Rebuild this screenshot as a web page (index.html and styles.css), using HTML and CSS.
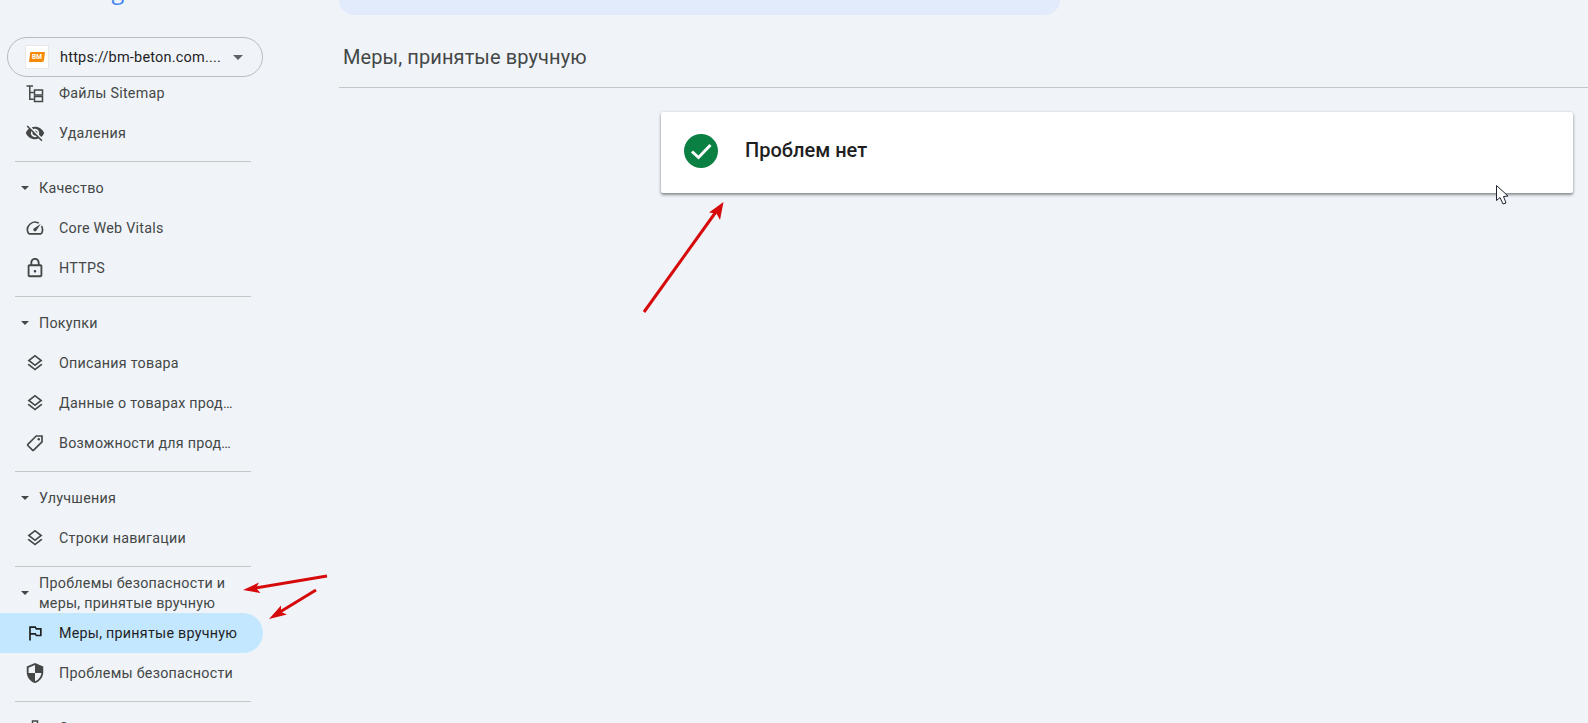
FILE: index.html
```html
<!DOCTYPE html>
<html lang="ru">
<head>
<meta charset="utf-8">
<title>Меры, принятые вручную</title>
<link rel="stylesheet" href="styles.css">
</head>
<body>
<svg class="defs" width="0" height="0" aria-hidden="true">
  <symbol id="i-layers" viewBox="0 0 24 24"><path d="M11.99 18.54l-7.37-5.73L3 14.07l9 7 9-7-1.63-1.27-7.38 5.74zM12 16l7.36-5.73L21 9l-9-7-9 7 1.63 1.27L12 16zm0-11.47L17.74 9 12 13.47 6.26 9 12 4.53z"/></symbol>
</svg>
<header class="topbar">
  <div class="logo"><span class="g-blue">G</span><span class="g-red">o</span><span class="g-yellow">o</span><span class="g-blue">g</span><span class="g-green">l</span><span class="g-red">e</span> <span class="g-grey">Search Console</span></div>
  <div class="search"></div>
</header>
<div class="layout">
  <aside class="sidebar">
    <div class="property">
      <span class="favicon"><svg width="16" height="10" viewBox="0 0 16 10"><path class="fav-shape" d="M2 0h14l-1 8a2 2 0 0 1-2 2H0l1-8a1.5 1.5 0 0 1 1-2z"/><text x="8" y="7.4" class="fav-text">BM</text></svg></span>
      <span class="property-url">https://bm-beton.com....</span>
      <span class="caret caret-prop"></span>
    </div>
    <nav class="nav">
      <div class="nav-inner">
        <a class="item"><svg class="ico" viewBox="0 0 20 20"><path class="line" d="M1.5 3h6.5M4.8 3v13.2h4M4.8 9.5h4"/><rect class="line" x="9.5" y="7" width="8" height="5"/><rect class="line" x="9.5" y="13.5" width="8" height="5"/></svg><span class="label">Файлы Sitemap</span></a>
        <a class="item"><svg class="ico" viewBox="0 0 24 24"><path d="M12 7c2.76 0 5 2.24 5 5 0 .65-.13 1.26-.36 1.83l2.92 2.92c1.51-1.26 2.7-2.89 3.43-4.75-1.73-4.39-6-7.5-11-7.5-1.4 0-2.74.25-3.98.7l2.16 2.16C10.74 7.13 11.35 7 12 7zM2 4.27l2.28 2.28.46.46C3.08 8.3 1.78 10.02 1 12c1.73 4.39 6 7.5 11 7.5 1.55 0 3.03-.3 4.38-.84l.42.42L19.73 22 21 20.73 3.27 3 2 4.27zM7.53 9.8l1.55 1.55c-.05.21-.08.43-.08.65 0 1.66 1.34 3 3 3 .22 0 .44-.03.65-.08l1.55 1.55c-.67.33-1.41.53-2.2.53-2.76 0-5-2.24-5-5 0-.79.2-1.53.53-2.2zm4.31-.78l3.15 3.15.02-.16c0-1.66-1.34-3-3-3l-.17.01z"/></svg><span class="label">Удаления</span></a>
        <hr class="divider">
        <div class="heading"><span class="caret"></span><span>Качество</span></div>
        <a class="item"><svg class="ico" viewBox="0 0 24 24"><path d="M20.38 8.57l-1.23 1.85a8 8 0 0 1-.22 7.58H5.07A8 8 0 0 1 15.58 6.85l1.85-1.23A10 10 0 0 0 3.35 19a2 2 0 0 0 1.72 1h13.85a2 2 0 0 0 1.74-1 10 10 0 0 0-.27-10.44zm-9.79 6.84a2 2 0 0 0 2.83 0l5.66-8.49-8.49 5.66a2 2 0 0 0 0 2.83z"/></svg><span class="label">Core Web Vitals</span></a>
        <a class="item"><svg class="ico ico-lg" viewBox="0 0 24 24"><path d="M18 8h-1V6c0-2.76-2.24-5-5-5S7 3.24 7 6v2H6c-1.1 0-2 .9-2 2v10c0 1.1.9 2 2 2h12c1.1 0 2-.9 2-2V10c0-1.1-.9-2-2-2zM9 6c0-1.66 1.34-3 3-3s3 1.34 3 3v2H9V6zm9 14H6V10h12v10zm-6-3c.8 0 1.4-.6 1.4-1.4s-.6-1.4-1.4-1.4-1.4.6-1.4 1.4.6 1.4 1.4 1.4z"/></svg><span class="label">HTTPS</span></a>
        <hr class="divider">
        <div class="heading"><span class="caret"></span><span>Покупки</span></div>
        <a class="item"><svg class="ico"><use href="#i-layers"/></svg><span class="label">Описания товара</span></a>
        <a class="item"><svg class="ico"><use href="#i-layers"/></svg><span class="label">Данные о товарах продавца</span></a>
        <a class="item"><svg class="ico" viewBox="0 0 24 24"><path d="M21.4 2.6H13L2.7 12.9a2 2 0 0 0 0 2.8l5.6 5.6a2 2 0 0 0 2.8 0L21.4 11V2.6zM19.4 10.2l-9.7 9.7-5.6-5.6 9.7-9.7h5.6v5.6z"/><circle cx="16.5" cy="7.5" r="1.5"/></svg><span class="label">Возможности для продавцов</span></a>
        <hr class="divider">
        <div class="heading"><span class="caret"></span><span>Улучшения</span></div>
        <a class="item"><svg class="ico"><use href="#i-layers"/></svg><span class="label">Строки навигации</span></a>
        <hr class="divider">
        <div class="heading heading-two"><span class="caret"></span><span>Проблемы безопасности и меры, принятые вручную</span></div>
        <a class="item item-active"><svg class="ico" viewBox="0 0 24 24"><path d="M14 6l-1-2H5v17h2v-7h5l1 2h7V6h-6zm4 8h-4l-1-2H7V6h5l1 2h5v6z"/></svg><span class="label">Меры, принятые вручную</span></a>
        <a class="item"><svg class="ico ico-lg" viewBox="0 0 24 24"><path d="M12 1L3 5v6c0 5.55 3.84 10.74 9 12 5.16-1.26 9-6.45 9-12V5l-9-4zm0 10.99h7c-.53 4.12-3.28 7.79-7 8.94V12H5V6.3l7-3.11v8.8z"/></svg><span class="label">Проблемы безопасности</span></a>
        <hr class="divider">
        <a class="item"><svg class="ico" viewBox="0 0 20 20"><path class="line" d="M7.5 3h5v4h-5zM10 7v10"/></svg><span class="label">Ссылки</span></a>
      </div>
    </nav>
  </aside>
  <main class="main">
    <div class="page-head"><h1 class="page-title">Меры, принятые вручную</h1></div>
    <section class="card">
      <svg class="status" viewBox="0 0 34 34"><circle cx="17" cy="17" r="17" fill="#0b8043"/><path d="M8 17.5l6.5 6L26.5 11" fill="none" stroke="#fff" stroke-width="3"/></svg>
      <span class="card-text">Проблем нет</span>
    </section>
  </main>
</div>
<svg class="annotations" width="1588" height="723" viewBox="0 0 1588 723" aria-hidden="true">
  <path class="arrow-line" d="M644 312L718 209"/>
  <path class="arrow-head" d="M723.5 202L720 220L716.5 213.5L709 212.5Z"/>
  <path class="arrow-line" d="M327 576L250 589"/>
  <path class="arrow-head" d="M243 590L259 582.5L256 588L260.5 593Z"/>
  <path class="arrow-line" d="M316 590L275 615"/>
  <path class="arrow-head" d="M269 619L281 605.5L281 612L287 614.5Z"/>
  <path class="cursor" d="M1496.5 185.5V200.5L1500 197.5L1503 204L1506 203L1503.5 196.5L1508 196Z"/>
</svg>
</body>
</html>
```
FILE: styles.css
```css
* { box-sizing: border-box; }
html, body { margin: 0; height: 723px; overflow: hidden; }
body {
  background: #f0f4f9;
  font-family: Roboto, "Noto Sans", Arial, sans-serif;
  color: #444746;
  position: relative;
}
.defs { display: block; height: 0; }
.topbar {
  height: 15px;
  display: flex;
  overflow: hidden;
}
.logo {
  width: 339px;
  flex: none;
  padding-left: 66px;
  font-family: "Open Sans", Roboto, sans-serif;
  font-size: 23.5px;
  line-height: 22px;
  margin-top: -21px;
  white-space: nowrap;
  height: 40px;
}
.g-blue { color: #4285f4; }
.g-red { color: #ea4335; }
.g-yellow { color: #fbbc05; }
.g-green { color: #34a853; }
.g-grey { color: #80868b; font-size: 19.5px; }
.search {
  width: 721px;
  height: 15px;
  margin-top: 0;
  background: #e1ebfc;
  border-radius: 0 0 24px 24px;
  flex: none;
}
.layout { display: flex; height: 708px; }
.sidebar {
  width: 339px;
  flex: none;
  display: flex;
  flex-direction: column;
  padding-top: 22px;
  overflow: hidden;
}
.property {
  margin-left: 7px;
  width: 256px;
  height: 40px;
  flex: none;
  border: 1px solid #b8bcc0;
  border-radius: 20px;
  display: flex;
  align-items: center;
  padding-left: 17px;
  background: #f0f4f9;
}
.favicon {
  width: 24px;
  height: 24px;
  background: #fff;
  border: 1px solid #e6e8ea;
  display: flex;
  align-items: center;
  justify-content: center;
  flex: none;
}
.fav-shape { fill: #f58a07; }
.fav-text { fill: #fff; font: 700 6.5px Roboto, sans-serif; text-anchor: middle; }
.property-url {
  margin-left: 11px;
  width: 161px;
  font-size: 14.5px;
  letter-spacing: .2px;
  color: #1f1f1f;
  white-space: nowrap;
  overflow: hidden;
}
.caret {
  width: 0;
  height: 0;
  border-left: 4.5px solid transparent;
  border-right: 4.5px solid transparent;
  border-top: 4.5px solid #444746;
  flex: none;
}
.caret-prop { margin-left: 12px; border-top-color: #5f6368; border-left-width: 5px; border-right-width: 5px; border-top-width: 5px; }
.nav { flex: 1; overflow: hidden; width: 263px; }
.nav-inner { margin-top: -4px; }
.item {
  display: flex;
  align-items: center;
  height: 40px;
  padding: 0 28px 0 25px;
  font-size: 14.3px;
  letter-spacing: .25px;
  color: #444746;
}
.item-active {
  background: #c2e7ff;
  border-radius: 0 20px 20px 0;
  color: #1f1f1f;
  padding-right: 16px;
}
.item-active .ico { fill: #1f1f1f; }
.ico { width: 20px; height: 20px; fill: #444746; flex: none; margin-right: 14px; }
.ico-lg { width: 22px; height: 22px; margin: 0 13px 0 -1px; }
.line { fill: none; stroke: #444746; stroke-width: 1.5; }
.label { white-space: nowrap; overflow: hidden; text-overflow: ellipsis; min-width: 0; }
.divider { border: 0; height: 1px; background: #c4c7c5; margin: 8px 15px 6px; width: 236px; }
.heading {
  display: flex;
  align-items: center;
  height: 40px;
  padding: 0 20px 0 21px;
  font-size: 14.3px;
  line-height: 20px;
  letter-spacing: .25px;
  color: #444746;
}
.heading .caret { margin-right: 10px; }
.heading-two { padding-right: 24px; }
.main { flex: 1; min-width: 0; }
.page-head {
  height: 73px;
  border-bottom: 1px solid #c4c7c5;
  padding: 11px 0 0 4px;
  display: flex;
  align-items: center;
}
.page-title { margin: 0; font-size: 20px; font-weight: 400; letter-spacing: .1px; color: #444746; }
.card {
  margin: 24px 15px 0 322px;
  height: 81px;
  background: #fff;
  border-radius: 2px;
  box-shadow: 0 2px 3px rgba(60,64,67,.55), 0 0 3px rgba(60,64,67,.15);
  display: flex;
  align-items: center;
  padding-left: 23px;
  padding-bottom: 4px;
}
.status { width: 34px; height: 34px; flex: none; margin-right: 27px; }
.card-text { font-size: 20px; font-weight: 500; color: #1f1f1f; margin-bottom: 2px; }
.annotations { position: absolute; left: 0; top: 0; pointer-events: none; }
.arrow-line { stroke: #d60a0a; stroke-width: 3; fill: none; }
.arrow-head { fill: #d60a0a; }
.cursor { fill: #fff; stroke: #1f2430; stroke-width: 1; stroke-linejoin: round; }
```
